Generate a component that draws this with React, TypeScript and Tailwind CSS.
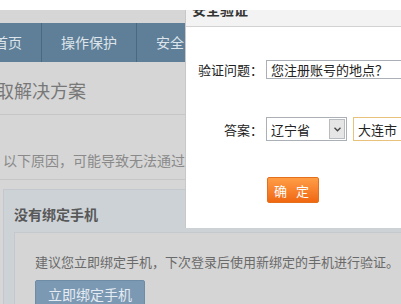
import React from 'react';

const font = { fontFamily: '"Noto Sans CJK SC", "Noto Sans", sans-serif' };

export default function App() {
  return (
    <div className="relative w-[401px] h-[304px] overflow-hidden bg-[#d6d6d6]" style={font}>
      {/* top white strip */}
      <div className="absolute left-0 top-0 w-full h-[10px] bg-white z-20" />

      {/* Background page (dimmed) */}
      <div className="flex flex-col">
        <div className="h-[23px]" />

        {/* Nav */}
        <div className="flex h-[39px] bg-[#5f7e97] -ml-[25px] text-[14px] text-[#dde5ec]">
          <div className="flex items-center px-[19px] border-r border-[#4b6880]">首页</div>
          <div className="flex items-center px-[19px] border-r border-[#4b6880]">操作保护</div>
          <div className="flex items-center px-[19px] border-r border-[#4b6880]">安全中心</div>
        </div>

        {/* Heading */}
        <div className="h-[53px] flex items-center border-b border-[#c6c6c6] overflow-hidden">
          <span className="text-[18px] text-[#787878] -ml-[22px] leading-none pt-[3px] whitespace-nowrap">获取解决方案</span>
        </div>

        <div className="h-[65px] flex items-end pb-[12px] border-b border-[#c6c6c6] pl-[3px]">
          <span className="text-[14px] text-[#8a8a8a] leading-none whitespace-nowrap">以下原因，可能导致无法通过安全验证</span>
        </div>

        {/* Phone box */}
        <div className="mt-[9px] ml-[3px] bg-[#cdd2d7] border-t border-l border-[#c2c8ce] flex flex-col">
          <div className="pl-[10px] pt-[17px] h-[42px] text-[14px] font-bold text-[#585858] leading-none">没有绑定手机</div>
          <div className="ml-[10px] bg-[#d5d5d5] border-t border-l border-[#c4c9ce] h-[80px] pl-[20px] pt-[22px] flex flex-col">
            <span className="text-[13px] text-[#6a6a6a] leading-none whitespace-nowrap">建议您立即绑定手机，下次登录后使用新绑定的手机进行验证。</span>
            <div className="mt-[12px] w-[110px] h-[28px] bg-[#7c99b3] border border-[#6f8ca6] rounded-[2px] flex items-center justify-center text-[14px] text-[#e4ebf2]">
              立即绑定手机
            </div>
          </div>
        </div>
      </div>

      {/* Dialog */}
      <div className="absolute left-[185px] top-0 w-[216px] h-[228px] bg-white border-l border-[#c8c8c8] overflow-hidden z-10">
        <div className="h-[27px] bg-[#f3f3f3] border-b border-[#d2d2d2] pl-[6px] pt-[1px] text-[14px] font-bold text-[#333] leading-[16px]">
          安全验证
        </div>

        <div className="flex items-center mt-[33px] h-[19px]">
          <span className="w-[77px] shrink-0 text-right text-[13px] text-[#222] leading-none whitespace-nowrap">验证问题：</span>
          <div className="ml-[3px] h-[19px] w-[150px] shrink-0 border border-[#aab0b6] flex items-center pl-[4px] text-[13px] text-[#222] leading-none whitespace-nowrap">
            您注册账号的地点？
          </div>
        </div>

        <div className="flex items-center mt-[38px] h-[24px]">
          <span className="w-[77px] shrink-0 text-right text-[13px] text-[#222] leading-none whitespace-nowrap">答案：</span>
          <div className="ml-[3px] h-[24px] w-[81px] shrink-0 border border-[#aab0b6] flex items-center">
            <span className="flex-1 pl-[4px] text-[13px] text-[#222] leading-none">辽宁省</span>
            <div className="w-[16px] h-[20px] mr-[1px] bg-[#e6e6e6] border border-[#b8bcc0] flex items-center justify-center">
              <svg width="7" height="5" viewBox="0 0 7 5">
                <path d="M0.5 0.8 L3.5 3.8 L6.5 0.8" fill="none" stroke="#444" strokeWidth="1.3" />
              </svg>
            </div>
          </div>
          <div className="ml-[6px] h-[24px] w-[70px] shrink-0 border border-[#e8c27a] flex items-center pl-[4px] text-[13px] text-[#222] leading-none whitespace-nowrap">
            大连市
          </div>
        </div>

        <div className="mt-[36px] ml-[81px] w-[52px] h-[26px] rounded-[2px] bg-gradient-to-b from-[#ff9d45] to-[#f0670e] border border-[#e4701e] flex items-center justify-center text-[13px] text-white leading-none tracking-[3px]">
          确&nbsp;定
        </div>
      </div>
    </div>
  );
}
